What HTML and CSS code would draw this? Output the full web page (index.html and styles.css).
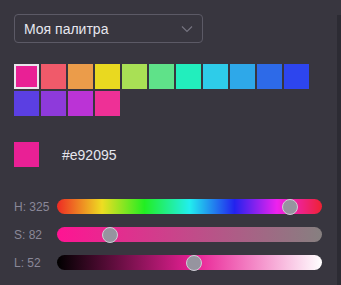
FILE: index.html
```html
<!DOCTYPE html>
<html lang="ru">
  <head>
    <meta charset="UTF-8" />
    <title>Палитра</title>
    <link rel="stylesheet" href="styles.css">
  </head>
  <body>
    <div class="panel">
      <div class="picker">
        <div class="select">
          <span>Моя палитра</span>
          <svg class="chevron" width="12" height="8" viewBox="0 0 12 8">
            <path d="M1 1.5 L6 6.5 L11 1.5" fill="none" stroke="#75737f" stroke-width="1.2" />
          </svg>
        </div>

        <div class="swatches">
          <div class="swatch active" style="background: #e92095"></div>
          <div class="swatch" style="background: #f05a6a"></div>
          <div class="swatch" style="background: #eb9c4a"></div>
          <div class="swatch" style="background: #e9d920"></div>
          <div class="swatch" style="background: #a9e055"></div>
          <div class="swatch" style="background: #5fe289"></div>
          <div class="swatch" style="background: #22eebd"></div>
          <div class="swatch" style="background: #2ecce9"></div>
          <div class="swatch" style="background: #2ea8e9"></div>
          <div class="swatch" style="background: #2d6ae8"></div>
          <div class="swatch" style="background: #2d45ee"></div>
          <div class="swatch" style="background: #5b3fe2"></div>
          <div class="swatch" style="background: #8e3adb"></div>
          <div class="swatch" style="background: #bb33d6"></div>
          <div class="swatch" style="background: #ee3096"></div>
        </div>

        <div class="current">
          <div class="preview"></div>
          <span class="hex">#e92095</span>
        </div>

        <div class="sliders">
          <div class="row">
            <label>H: 325</label>
            <input class="range hue" type="range" min="0" max="360" value="325" />
          </div>
          <div class="row">
            <label>S: 82</label>
            <input class="range sat" type="range" min="0" max="100" value="18" />
          </div>
          <div class="row">
            <label>L: 52</label>
            <input class="range light" type="range" min="0" max="100" value="52" />
          </div>
        </div>
      </div>
      <div class="rail"></div>
    </div>
  </body>
</html>
```

FILE: styles.css
```css
html,
body {
  margin: 0;
  padding: 0;
  height: 100%;
  background-color: #38363f;
}

body {
  font-family: "Liberation Sans", Arial, sans-serif;
}

.panel {
  display: flex;
  height: 100%;
}

.picker {
  flex: 1;
  padding: 14px 0 0 14px;
}

/* полоса справа, как у прокрутки */
.rail {
  width: 4px;
  margin-top: 15px;
  background-color: #2c2b33;
}

.select {
  box-sizing: border-box;
  width: 189px;
  height: 29px;
  display: flex;
  align-items: center;
  justify-content: space-between;
  padding: 0 9px 0 9px;
  border: 1px solid #5c5a66;
  border-radius: 4px;
  color: #e6e6ee;
  font-size: 14px;
}

.chevron {
  margin-top: 1px;
}

.swatches {
  display: grid;
  grid-template-columns: repeat(11, 25px);
  grid-auto-rows: 25px;
  gap: 2px;
  margin-top: 21px;
}

.swatch {
  box-sizing: border-box;
}

.swatch.active {
  border: 2px solid #e8e6ec;
}

.current {
  display: flex;
  align-items: center;
  margin-top: 26px;
}

.preview {
  width: 25px;
  height: 25px;
  background-color: #e92095;
}

.hex {
  margin-left: 23px;
  color: #e6e6ee;
  font-size: 14px;
}

.sliders {
  display: flex;
  flex-direction: column;
  gap: 13px;
  margin-top: 32px;
}

.row {
  display: flex;
  align-items: center;
}

.row label {
  width: 43px;
  color: #8a8898;
  font-size: 12px;
}

.range {
  -webkit-appearance: none;
  appearance: none;
  width: 265px;
  height: 15px;
  margin: 0;
  border-radius: 8px;
  outline: none;
}

.range::-webkit-slider-thumb {
  -webkit-appearance: none;
  appearance: none;
  box-sizing: border-box;
  width: 16px;
  height: 16px;
  border-radius: 50%;
  background-color: #96949f;
  border: 1.5px solid #cfcdd6;
}

.hue {
  background: linear-gradient(to right, #ee2a24, #eedd22 17%, #22ee22 33%, #22eeee 50%, #2222ee 67%, #ee22ee 83%, #ee2233);
}

.sat {
  background: linear-gradient(to right, #ff1493, #868080);
}

.light {
  background: linear-gradient(to right, #000000, #e92095 52%, #ffffff);
}
```
